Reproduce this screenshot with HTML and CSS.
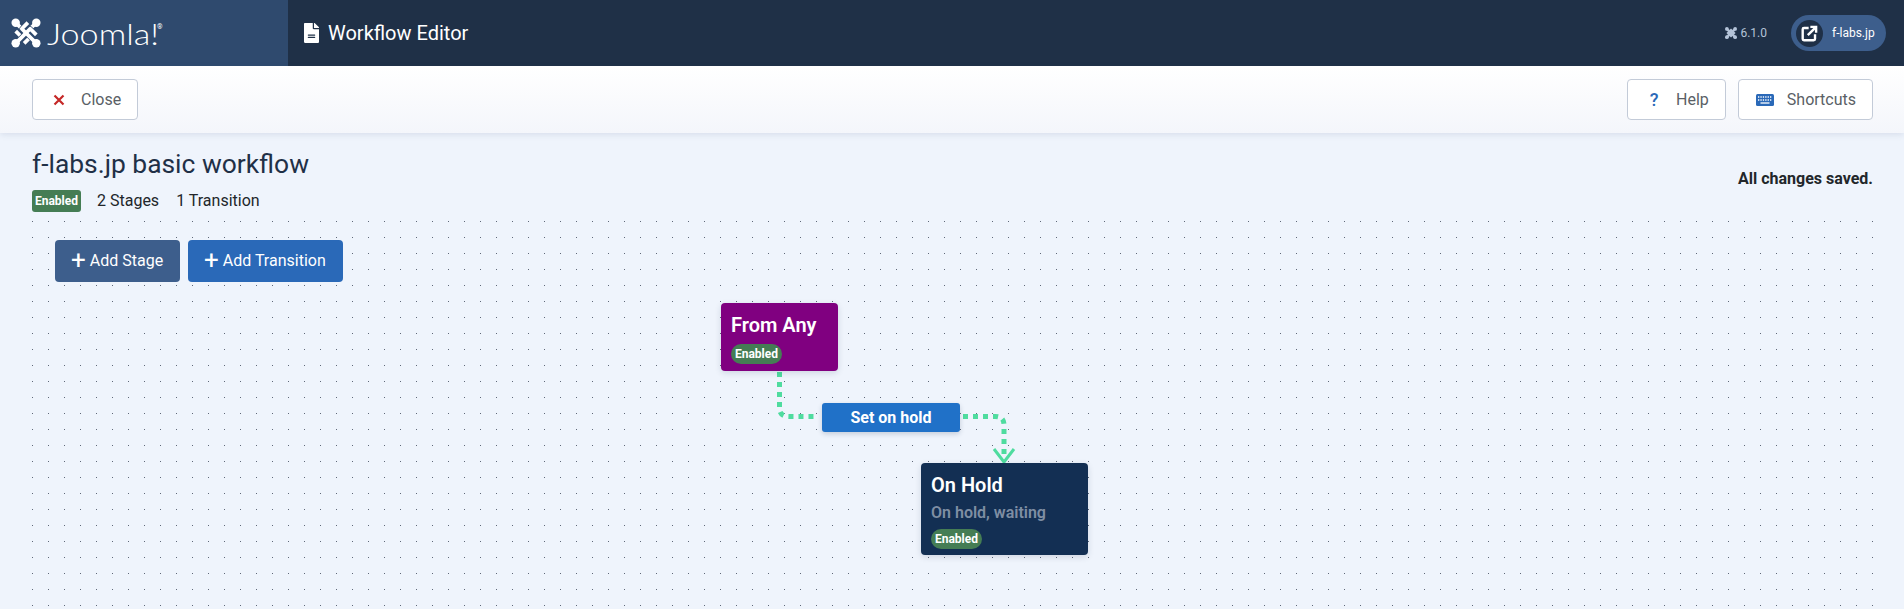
FILE: index.html
```html
<!DOCTYPE html>
<html lang="en">
<head>
  <meta charset="UTF-8" />
  <title>Workflow Editor</title>
  <link rel="stylesheet" href="styles.css">
  <meta name="viewport" content="width=device-width, initial-scale=1.0" />
</head>
<body>

  <header class="topbar">
    <div class="brand">
      <svg class="brand-mark" viewBox="0 0 32 32" aria-hidden="true">
        <g fill="none" stroke-linejoin="round">
          <g stroke="#2f4a6e" stroke-width="5.400">
            <path d="M5 5 L20.500 20.500 L14 27" />
            <path d="M27 5 L11.500 20.500 L5 14" />
          </g>
          <g stroke="#fff" stroke-width="4">
            <path d="M5 5 L20.500 20.500 L14 27" />
            <path d="M27 5 L11.500 20.500 L5 14" />
          </g>
          <g stroke="#2f4a6e" stroke-width="5.400">
            <path d="M5 27 L20.500 11.500 L27 18" />
            <path d="M27 27 L11.500 11.500 L18 5" />
          </g>
          <g stroke="#fff" stroke-width="4">
            <path d="M5 27 L20.500 11.500 L27 18" />
            <path d="M27 27 L11.500 11.500 L18 5" />
          </g>
        </g>
        <g fill="#fff">
          <circle cx="5" cy="5" r="4.500" />
          <circle cx="27" cy="5" r="4.500" />
          <circle cx="5" cy="27" r="4.500" />
          <circle cx="27" cy="27" r="4.500" />
        </g>
      </svg>
      <span class="brand-name">Joomla!</span>
      <span class="brand-reg">®</span>
    </div>
    <div class="page-title">
      <svg class="title-icon" viewBox="0 0 384 512" aria-hidden="true">
        <path fill="#fff" d="M224 136V0H24C10.700 0 0 10.700 0 24v464c0 13.300 10.700 24 24 24h336c13.300 0 24-10.700 24-24V160H248c-13.200 0-24-10.800-24-24zm64 236c0 6.600-5.400 12-12 12H108c-6.600 0-12-5.400-12-12v-8c0-6.600 5.400-12 12-12h168c6.600 0 12 5.400 12 12v8zm0-64v8c0 6.600-5.400 12-12 12H108c-6.600 0-12-5.400-12-12v-8c0-6.600 5.400-12 12-12h168c6.600 0 12 5.400 12 12zm96-186v6H256V0h6c6.400 0 12.500 2.500 17 7l98 98c4.500 4.500 7 10.600 7 16.900z" />
      </svg>
      <span>Workflow Editor</span>
    </div>
    <div class="topbar-right">
      <div class="version">
        <svg class="version-icon" viewBox="0 0 32 32" aria-hidden="true">
          <g fill="none" stroke="#b4c3d8" stroke-width="6">
            <path d="M5 5 L27 27" />
            <path d="M27 5 L5 27" />
            <path d="M8 16 L16 8 L24 16 L16 24 Z" />
          </g>
          <g fill="#b4c3d8">
            <circle cx="5" cy="5" r="5" />
            <circle cx="27" cy="5" r="5" />
            <circle cx="5" cy="27" r="5" />
            <circle cx="27" cy="27" r="5" />
          </g>
        </svg>
        <span>6.1.0</span>
      </div>
      <div class="site-pill">
        <span class="site-icon">
          <svg viewBox="0 0 20 20" aria-hidden="true">
            <g fill="none" stroke="#fff" stroke-width="2.800">
              <path d="M9 3.500 H3.500 Q2 3.500 2 5 V16.500 Q2 18 3.500 18 H15 Q16.500 18 16.500 16.500 V11" />
              <path d="M8 12 L17 3" />
              <path d="M11 2.200 H17.800 V9" />
            </g>
          </svg>
        </span>
        <span class="site-name">f-labs.jp</span>
      </div>
    </div>
  </header>

  <div class="toolbar">
    <button class="tool-btn">
      <svg class="tool-icon" viewBox="0 0 12 12" aria-hidden="true">
        <path d="M1.500 1.500 L10.500 10.500 M10.500 1.500 L1.500 10.500" fill="none" stroke="#c52827" stroke-width="2.200" />
      </svg>
      <span>Close</span>
    </button>
    <div class="toolbar-right">
      <button class="tool-btn">
        <span class="help-mark">?</span>
        <span>Help</span>
      </button>
      <button class="tool-btn">
        <svg class="key-icon" viewBox="0 0 18 12" aria-hidden="true">
          <rect width="18" height="12" rx="1.500" fill="#2a69b8" />
          <path d="M2 3 H16 M2 6 H16" stroke="#fff" stroke-width="1.300" stroke-dasharray="1.300 1.100" />
          <path d="M4.500 9 H13.500" stroke="#fff" stroke-width="1.300" />
        </svg>
        <span>Shortcuts</span>
      </button>
    </div>
  </div>

  <main class="content">
    <div class="workflow-head">
      <div>
        <h1>f-labs.jp basic workflow</h1>
        <div class="workflow-meta">
          <span class="badge">Enabled</span>
          <span class="count">2 Stages</span>
          <span class="count">1 Transition</span>
        </div>
      </div>
      <p class="saved">All changes saved.</p>
    </div>

    <section class="canvas">
      <div class="canvas-actions">
        <button class="add-btn add-stage"><span class="plus">+</span> Add Stage</button>
        <button class="add-btn add-transition"><span class="plus">+</span> Add Transition</button>
      </div>

      <svg class="edges" viewBox="0 0 1840 388" aria-hidden="true">
        <g fill="none" stroke="#4fdc9f" stroke-width="5" stroke-dasharray="5 5">
          <path d="M747.500 151 V187 Q747.500 195.500 757 195.500 H786" />
          <path d="M931 195.500 H963 Q972 195.500 972 204 V237" />
        </g>
        <path d="M962 228 L972 241 L982 228" fill="none" stroke="#4fdc9f" stroke-width="3" />
      </svg>

      <div class="stage stage-any">
        <h3>From Any</h3>
        <span class="pill">Enabled</span>
      </div>
      <div class="transition">Set on hold</div>
      <div class="stage stage-hold">
        <h3>On Hold</h3>
        <p>On hold, waiting</p>
        <span class="pill">Enabled</span>
      </div>
    </section>
  </main>

</body>
</html>
```

FILE: styles.css
```css
* {
  box-sizing: border-box;
}

html, body {
  height: 100%;
}

body {
  margin: 0;
  height: 609px;
  overflow: hidden;
  font-family: 'Roboto', 'Liberation Sans', sans-serif;
  font-size: 16px;
  color: #22262a;
  background: #eff4fc;
  display: flex;
  flex-direction: column;
}

/* top bar */
.topbar {
  height: 66px;
  flex: none;
  display: flex;
  align-items: center;
  background: #1f3047;
  color: #fff;
}

.brand {
  width: 288px;
  height: 100%;
  display: flex;
  align-items: center;
  padding-left: 11px;
  background: #2f4a6e;
}

.brand-mark {
  width: 30px;
  height: 30px;
  margin-right: 6px;
}

.brand-name {
  width: 110px;
  font-family: 'Lato', sans-serif;
  font-weight: 300;
  font-size: 29px;
  transform: scaleX(1.18);
  transform-origin: left center;
}

.brand-reg {
  font-size: 7px;
  align-self: flex-start;
  margin-top: 23px;
}

.page-title {
  display: flex;
  align-items: center;
  gap: 9px;
  padding-left: 16px;
  font-size: 20px;
  font-weight: 400;
}

.title-icon {
  width: 15px;
  height: 20px;
}

.topbar-right {
  margin-left: auto;
  display: flex;
  align-items: center;
  padding-right: 18px;
}

.version {
  display: flex;
  align-items: center;
  gap: 3px;
  font-size: 12px;
  color: #b4c3d8;
  margin-right: 24px;
}

.version-icon {
  width: 12px;
  height: 12px;
}

.site-pill {
  width: 95px;
  height: 36px;
  border-radius: 18px;
  background: #3d5e8c;
  display: flex;
  align-items: center;
  padding-left: 5px;
}

.site-icon {
  width: 27px;
  height: 27px;
  border-radius: 50%;
  background: #1f3047;
  display: flex;
  align-items: center;
  justify-content: center;
}

.site-icon svg {
  width: 17px;
  height: 17px;
}

.site-name {
  font-size: 12px;
  font-weight: 400;
  margin-left: 9px;
}

/* toolbar */
.toolbar {
  height: 67px;
  flex: none;
  display: flex;
  align-items: center;
  justify-content: space-between;
  padding: 0 31px 0 32px;
  background: linear-gradient(#fff, #f4f6fb);
  box-shadow: 0 2px 6px rgba(60, 80, 120, 0.12);
  position: relative;
}

.toolbar-right {
  display: flex;
  gap: 12px;
}

.tool-btn {
  height: 41px;
  display: flex;
  align-items: center;
  padding: 0 16px 0 17px;
  background: #fff;
  border: 1px solid #c3cbd8;
  border-radius: 4px;
  font-family: inherit;
  font-size: 16px;
  color: #5a5f66;
}

.tool-icon {
  width: 12px;
  height: 12px;
  margin: 0 16px 0 3px;
}

.help-mark {
  width: 12px;
  margin: 0 16px 0 3px;
  font-size: 18px;
  font-weight: 500;
  color: #2a69b8;
  text-align: center;
}

.key-icon {
  width: 18px;
  height: 12px;
  margin-right: 13px;
}

/* content */
.content {
  flex: 1;
  display: flex;
  flex-direction: column;
  padding: 0 31px 0 32px;
  min-height: 0;
}

.workflow-head {
  height: 88px;
  flex: none;
  display: flex;
  justify-content: space-between;
}

h1 {
  margin: 15px 0 0;
  font-size: 26.4px;
  font-weight: 400;
  line-height: 32px;
  color: #1f3047;
}

.workflow-meta {
  display: flex;
  align-items: center;
  margin-top: 10px;
}

.badge {
  width: 49px;
  height: 22px;
  margin-right: 16px;
  border-radius: 3px;
  background: #457d54;
  color: #fff;
  font-size: 12px;
  font-weight: 700;
  line-height: 22px;
  text-align: center;
}

.count {
  margin-right: 17px;
  padding-bottom: 2px;
}

.saved {
  margin: 36px 0 0;
  font-weight: 700;
}

/* canvas */
.canvas {
  flex: 1;
  position: relative;
  padding: 19px 23px;
  background-image: radial-gradient(circle at 0.5px 0.5px, #5f6878 0.7px, transparent 0.8px);
  background-size: 16px 16px;
}

.canvas-actions {
  display: flex;
  gap: 8px;
}

.add-btn {
  height: 42px;
  padding: 0 16px 2px;
  border: 0;
  border-radius: 4px;
  color: #fff;
  font-family: inherit;
  font-size: 16px;
  display: flex;
  align-items: center;
  gap: 4px;
}

.plus {
  font-size: 26px;
  font-weight: 400;
  line-height: 1;
}

.add-stage {
  width: 125px;
  background: #3d5e8c;
}

.add-transition {
  width: 155px;
  background: #2a69b8;
}

.edges {
  position: absolute;
  left: 0;
  top: 0;
  width: 1840px;
  height: 388px;
}

.stage {
  position: absolute;
  border-radius: 4px;
  padding: 10px;
  color: #fff;
  box-shadow: 0 2px 6px rgba(30, 50, 80, 0.15);
}

.stage h3 {
  margin: 0;
  font-size: 20px;
  font-weight: 600;
  line-height: 24px;
}

.stage p {
  margin: 7px 0 0;
  font-size: 16px;
  font-weight: 600;
  line-height: 18px;
  color: #7f8ea3;
}

.stage-any {
  left: 689px;
  top: 82px;
  width: 117px;
  height: 68px;
  background: #800080;
}

.stage-hold {
  left: 889px;
  top: 242px;
  width: 167px;
  height: 92px;
  background: #132f53;
}

.pill {
  display: block;
  width: 51px;
  height: 20px;
  margin-top: 7px;
  border-radius: 10px;
  background: #457d54;
  color: #fff;
  font-size: 12px;
  font-weight: 700;
  line-height: 20px;
  text-align: center;
}

.transition {
  position: absolute;
  left: 790px;
  top: 182px;
  width: 138px;
  height: 29px;
  border-radius: 3px;
  background: #2071c8;
  color: #fff;
  font-size: 16px;
  font-weight: 700;
  line-height: 29px;
  text-align: center;
  box-shadow: 0 2px 5px rgba(30, 50, 80, 0.2);
}
```
